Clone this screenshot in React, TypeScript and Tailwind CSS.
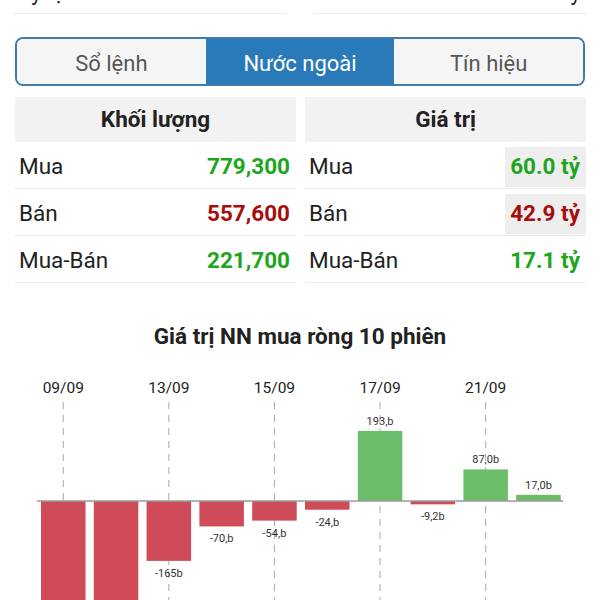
import React, { useState } from "react";

const tabs = ["Sổ lệnh", "Nước ngoài", "Tín hiệu"];

interface Row {
  label: string;
  value: string;
  color: string;
  boxed?: boolean;
}

const volumeRows: Row[] = [
  { label: "Mua", value: "779,300", color: "text-[#1ea51e]" },
  { label: "Bán", value: "557,600", color: "text-[#a80d0d]" },
  { label: "Mua-Bán", value: "221,700", color: "text-[#1ea51e]" },
];

const valueRows: Row[] = [
  { label: "Mua", value: "60.0 tỷ", color: "text-[#1ea51e]", boxed: true },
  { label: "Bán", value: "42.9 tỷ", color: "text-[#a80d0d]", boxed: true },
  { label: "Mua-Bán", value: "17.1 tỷ", color: "text-[#1ea51e]" },
];

// net foreign buy, billions
const sessions = [
  { value: -420, label: "-420b" },
  { value: -385, label: "-385b" },
  { value: -165, label: "-165b" },
  { value: -70, label: "-70,b" },
  { value: -54, label: "-54,b" },
  { value: -24, label: "-24,b" },
  { value: 193, label: "193,b" },
  { value: -9.2, label: "-9,2b" },
  { value: 87, label: "87,0b" },
  { value: 17, label: "17,0b" },
];

const dates = ["09/09", "13/09", "15/09", "17/09", "21/09"];

const StatTable: React.FC<{ title: string; rows: Row[] }> = ({ title, rows }) => (
  <div className="flex-1 flex flex-col">
    <div className="h-[45px] bg-[#f2f2f2] flex items-center justify-center text-[22.5px] font-bold text-[#222]">
      {title}
    </div>
    {rows.map((r) => (
      <div
        key={r.label}
        className="h-[47px] flex items-center justify-between border-b border-[#ececec] pl-[4px] pt-[4px]"
      >
        <span className="text-[22.5px] text-[#222]">{r.label}</span>
        <span
          className={`h-[40px] flex items-center pr-[6px] text-[22.5px] font-bold ${r.color} ${
            r.boxed ? "bg-[#eeeeee] pl-[4px] w-[81px] justify-end" : ""
          }`}
        >
          {r.value}
        </span>
      </div>
    ))}
  </div>
);

const NetChart: React.FC = () => {
  const base = 141;
  const scale = 0.363;
  const step = 52.8;
  const x0 = 41;
  const barW = 44.5;
  return (
    <svg width={600} height={240} className="block" style={{ fontFamily: "Roboto, sans-serif" }}>
      {dates.map((d, i) => {
        const cx = x0 + barW / 2 + i * 2 * step;
        return (
          <g key={d}>
            <text x={cx} y={33} textAnchor="middle" fontSize={15.5} fill="#222">
              {d}
            </text>
            <line x1={cx} y1={42} x2={cx} y2={240} stroke="#a8a8a8" strokeWidth={1} strokeDasharray="7 6" />
          </g>
        );
      })}
      {sessions.map((s, i) => {
        const x = x0 + i * step;
        const h = Math.abs(s.value) * scale;
        const pos = s.value > 0;
        return (
          <g key={i}>
            <rect
              x={x}
              y={pos ? base - h : base}
              width={barW}
              height={h}
              fill={pos ? "#6bbd69" : "#d04b59"}
            />
            <text
              x={x + barW / 2}
              y={pos ? base - h - 6 : base + h + 16}
              textAnchor="middle"
              fontSize={11}
              fill="#333"
            >
              {s.label}
            </text>
          </g>
        );
      })}
      <line x1={37} y1={base} x2={563} y2={base} stroke="#9a9a9a" strokeWidth={1.5} />
    </svg>
  );
};

export default function App() {
  const [active, setActive] = useState(1);
  return (
    <div className="w-[600px] h-[600px] overflow-hidden bg-white font-['Roboto',sans-serif]">
      {/* clipped row above */}
      <div className="flex gap-[26px] px-[13px]">
        <div className="flex-1 h-[14px] border-b border-[#ececec] overflow-hidden flex items-end justify-between px-[6px] text-[22px] leading-[30px] text-[#222]">
          <span className="mb-[5px]">Tỷ lệ</span>
          <span className="mb-[5px] text-[#666]">…</span>
        </div>
        <div className="flex-1 h-[14px] border-b border-[#ececec] overflow-hidden flex items-end justify-between px-[6px] text-[22px] leading-[30px] text-[#222]">
          <span className="mb-[5px] text-[#666]">Vốn</span>
          <span className="mb-[5px]">1.2 tỷ</span>
        </div>
      </div>

      {/* tabs */}
      <div className="mt-[23px] mx-[15px] h-[49px] flex rounded-[8px] border-2 border-[#3f7bab] overflow-hidden">
        {tabs.map((t, i) => (
          <button
            key={t}
            onClick={() => setActive(i)}
            className={`flex-1 flex items-center justify-center pt-[3px] text-[22px] ${
              i === active ? "bg-[#2a7ab9] text-white" : "bg-[#f5f5f5] text-[#555]"
            }`}
          >
            {t}
          </button>
        ))}
      </div>

      {/* tables */}
      <div className="mt-[11px] ml-[15px] mr-[14px] flex gap-[9px]">
        <StatTable title="Khối lượng" rows={volumeRows} />
        <StatTable title="Giá trị" rows={valueRows} />
      </div>

      {/* chart */}
      <div className="mt-[37px] text-center text-[22.5px] font-bold text-[#222]">
        Giá trị NN mua ròng 10 phiên
      </div>
      <div className="mt-[6px]">
        <NetChart />
      </div>
    </div>
  );
}
